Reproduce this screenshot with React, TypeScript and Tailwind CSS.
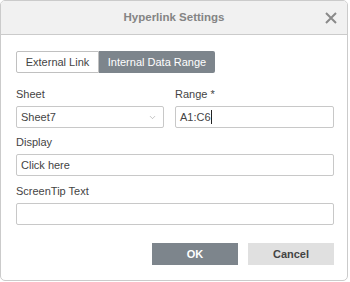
import { ChevronDown } from "lucide-react";

const font = { fontFamily: '"Liberation Sans", Arial, sans-serif' };

function Field({ label, children }: { label: string; children: React.ReactNode }) {
  return (
    <div>
      <div className="h-4 leading-4 text-[11px] text-[#444]">{label}</div>
      <div className="mt-1">{children}</div>
    </div>
  );
}

export default function App() {
  return (
    <div className="w-[350px] h-[282px] bg-white" style={font}>
      <div className="w-[348px] h-[281px] border border-[#cbcbcb] rounded-[5px] overflow-hidden bg-white">
        {/* Header */}
        <div className="h-[34px] bg-[#f1f1f1] border-b border-[#cbcbcb] flex items-center">
          <div className="w-[32px]" />
          <div className="flex-1 text-center text-[11.5px] font-bold text-[#848484]">Hyperlink Settings</div>
          <button className="w-[32px] h-full flex items-center justify-center">
            <svg width="12" height="12" viewBox="0 0 12 12" fill="none" stroke="#8a8a8a" strokeWidth="2">
              <path d="M1 1 L11 11 M11 1 L1 11" />
            </svg>
          </button>
        </div>

        <div className="pl-[15px] pr-[13px] pt-4">
          {/* Tabs */}
          <div className="flex h-[22px] text-[11px]">
            <div className="w-[83px] flex items-center justify-center border border-[#c0c0c0] rounded-l-[2px] text-[#444]">
              External Link
            </div>
            <div className="w-[116px] flex items-center justify-center bg-[#7d858c] rounded-r-[2px] text-white">
              Internal Data Range
            </div>
          </div>

          {/* Sheet / Range */}
          <div className="grid grid-cols-[148px_1fr] gap-x-[11px] mt-[13px]">
            <Field label="Sheet">
              <div className="h-[22px] border border-[#c8c8c8] rounded-[2px] flex items-center pl-[4px] pr-[6px] text-[11px] text-[#444]">
                <span className="flex-1">Sheet7</span>
                <ChevronDown className="w-[9px] h-[9px] text-[#9a9a9a]" strokeWidth={1.5} />
              </div>
            </Field>
            <Field label="Range *">
              <div className="h-[22px] border border-[#c8c8c8] rounded-[2px] flex items-center pl-[4px] text-[11px] text-[#444]">
                A1:C6<span className="inline-block w-px h-[14px] bg-[#222]" />
              </div>
            </Field>
          </div>

          <div className="mt-[6px]">
            <Field label="Display">
              <div className="h-[22px] border border-[#c8c8c8] rounded-[2px] flex items-center pl-[4px] text-[11px] text-[#444]">
                Click here
              </div>
            </Field>
          </div>

          <div className="mt-[7px]">
            <Field label="ScreenTip Text">
              <div className="h-[22px] border border-[#c8c8c8] rounded-[2px]" />
            </Field>
          </div>

          {/* Buttons */}
          <div className="flex justify-end gap-[10px] mt-[18px]">
            <button className="w-[86px] h-[22px] bg-[#7d858c] text-white text-[11px] font-bold">OK</button>
            <button className="w-[86px] h-[22px] bg-[#e0e0e0] text-[#444] text-[11px] font-bold">Cancel</button>
          </div>
        </div>
      </div>
    </div>
  );
}
